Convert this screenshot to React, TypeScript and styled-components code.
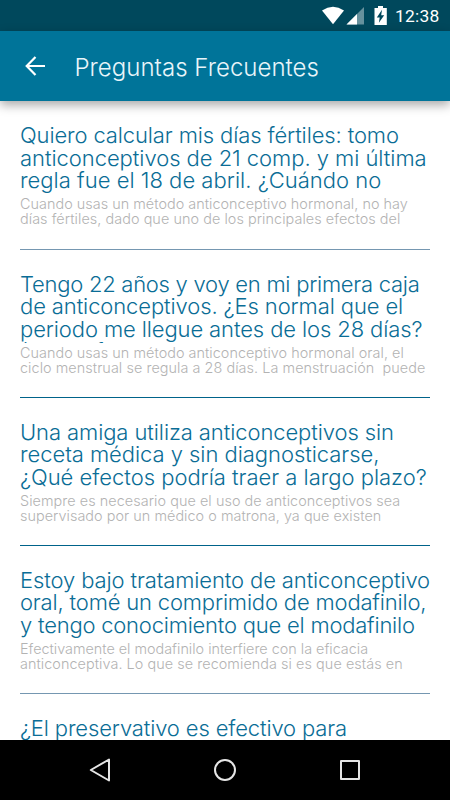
import React from 'react';
import styled, { createGlobalStyle } from 'styled-components';

const GlobalStyle = createGlobalStyle`
  * { box-sizing: border-box; }
  body { margin: 0; background: #fff; }
`;

const Screen = styled.div`
  display: flex;
  flex-direction: column;
  width: 450px;
  height: 800px;
  overflow: hidden;
  background: #fff;
  font-family: Inter, 'Liberation Sans', sans-serif;
`;

const StatusBar = styled.div`
  display: flex;
  align-items: center;
  justify-content: flex-end;
  flex: 0 0 31px;
  padding-right: 10px;
  background: #00485c;
`;

const StatusIcons = styled.svg`
  display: block;
  width: 68px;
  height: 31px;
`;

const Clock = styled.span`
  width: 45px;
  margin-left: 6px;
  padding-top: 1px;
  color: #fff;
  font: 450 17.4px/20px Roboto, sans-serif;
  letter-spacing: 0.25px;
  white-space: nowrap;
`;

const AppBar = styled.header`
  display: flex;
  align-items: center;
  flex: 0 0 70px;
  padding-left: 25px;
  background: #007499;
  box-shadow: 0 4px 10px rgba(0, 0, 0, 0.34);
  z-index: 1;
`;

const BackIcon = styled.svg`
  display: block;
  width: 21px;
  height: 20px;
  margin-right: 28.5px;
`;

const ScreenTitle = styled.h1`
  margin: 3px 0 0;
  color: #e8f5fa;
  font-size: 24px;
  font-weight: 300;
  line-height: 30px;
  letter-spacing: 0.03px;
`;

const QuestionList = styled.main`
  flex: 1 1 0;
  min-height: 0;
  overflow: hidden;
  padding: 0.4px 20px 0;
`;

const Item = styled.article<{ $divider: string }>`
  height: 148.2px;
  padding-top: 23px;
  border-bottom: 1px solid ${(p) => p.$divider};
`;

const Question = styled.h2`
  height: 70px;
  margin: 0 -4px 0 0;
  overflow: hidden;
  color: #0a6d96;
  font-size: 22px;
  font-weight: 300;
  line-height: 22.5px;
`;

const Answer = styled.p`
  margin: 0;
  padding-top: 2px;
  color: #b3b3b3;
  font-size: 14.4px;
  font-weight: 300;
  line-height: 15.1px;
`;

const Line = styled.span<{ $tracking: number }>`
  display: block;
  white-space: pre;
  letter-spacing: ${(p) => p.$tracking}px;
`;

const NavBar = styled.nav`
  display: flex;
  align-items: center;
  justify-content: space-between;
  flex: 0 0 60px;
  padding: 0 88px;
  background: #000;
`;

const NavIcon = styled.svg`
  display: block;
  width: 24px;
  height: 24px;
  fill: none;
  stroke: #e6e6e6;
  stroke-width: 2;
  stroke-linejoin: round;
`;

type TextLine = [text: string, tracking: number];
type Entry = { question: TextLine[]; answer: TextLine[]; divider: string };

const SOFT = '#7597b1';
const STRONG = '#00638a';

const entries: Entry[] = [
  {
    question: [
      ['Quiero calcular mis días fértiles: tomo', -0.12],
      ['anticonceptivos de 21 comp. y mi última', -0.05],
      ['regla fue el 18 de abril. ¿Cuándo no', 0.02],
    ],
    answer: [
      ['Cuando usas un método anticonceptivo hormonal, no hay', 0.03],
      ['días fértiles, dado que uno de los principales efectos del', 0.06],
    ],
    divider: SOFT,
  },
  {
    question: [
      ['Tengo 22 años y voy en mi primera caja', -0.26],
      ['de anticonceptivos. ¿Es normal que el', -0.11],
      ['periodo me llegue antes de los 28 días?', -0.11],
      ['(           f                            l', 0],
    ],
    answer: [
      ['Cuando usas un método anticonceptivo hormonal oral, el', 0.04],
      ['ciclo menstrual se regula a 28 días. La menstruación  puede', 0.06],
    ],
    divider: STRONG,
  },
  {
    question: [
      ['Una amiga utiliza anticonceptivos sin', -0.09],
      ['receta médica y sin diagnosticarse,', -0.05],
      ['¿Qué efectos podría traer a largo plazo?', -0.02],
    ],
    answer: [
      ['Siempre es necesario que el uso de anticonceptivos sea', 0.06],
      ['supervisado por un médico o matrona, ya que existen', 0.04],
    ],
    divider: STRONG,
  },
  {
    question: [
      ['Estoy bajo tratamiento de anticonceptivo', -0.12],
      ['oral, tomé un comprimido de modafinilo,', -0.17],
      ['y tengo conocimiento que el modafinilo', -0.22],
    ],
    answer: [
      ['Efectivamente el modafinilo interfiere con la eficacia', -0.01],
      ['anticonceptiva. Lo que se recomienda si es que estás en', 0.06],
    ],
    divider: SOFT,
  },
  {
    question: [['¿El preservativo es efectivo para', -0.14]],
    answer: [],
    divider: STRONG,
  },
];

const renderLines = (lines: TextLine[]) =>
  lines.map(([text, tracking]) => (
    <Line key={text} $tracking={tracking}>
      {text}
    </Line>
  ));

export default function App() {
  return (
    <>
      <GlobalStyle />
      <Screen>
        <StatusBar>
          <StatusIcons viewBox="0 0 68 31">
            <path d="M1 10.4Q12 3 23 10.4L12 24.3Z" fill="#fff" />
            <path d="M43 7V24.5H25.5Z" fill="#fff" opacity="0.4" />
            <path d="M36 14V24.5H25.5Z" fill="#fff" />
            <path
              fillRule="evenodd"
              fill="#fff"
              d="M57 6h5v2h3.8v17h-12.3V8H57ZM61 9.8 55.8 17.4h2.9l-.8 5.4 5.3-7.6h-3Z"
            />
          </StatusIcons>
          <Clock>12:38</Clock>
        </StatusBar>
        <AppBar>
          <BackIcon viewBox="0 0 21 20" fill="none" stroke="#fff" strokeWidth="2.2">
            <path d="M20 10H2M10.5 1 1.7 10 10.5 19" />
          </BackIcon>
          <ScreenTitle>Preguntas Frecuentes</ScreenTitle>
        </AppBar>
        <QuestionList>
          {entries.map((entry) => (
            <Item key={entry.question[0][0]} $divider={entry.divider}>
              <Question>{renderLines(entry.question)}</Question>
              <Answer>{renderLines(entry.answer)}</Answer>
            </Item>
          ))}
        </QuestionList>
        <NavBar>
          <NavIcon viewBox="0 0 24 24">
            <path d="M21 1.5V22.5L2.8 12Z" />
          </NavIcon>
          <NavIcon viewBox="0 0 24 24">
            <circle cx="12" cy="12" r="10" />
          </NavIcon>
          <NavIcon viewBox="0 0 24 24">
            <rect x="3" y="3" width="18" height="18" />
          </NavIcon>
        </NavBar>
      </Screen>
    </>
  );
}
